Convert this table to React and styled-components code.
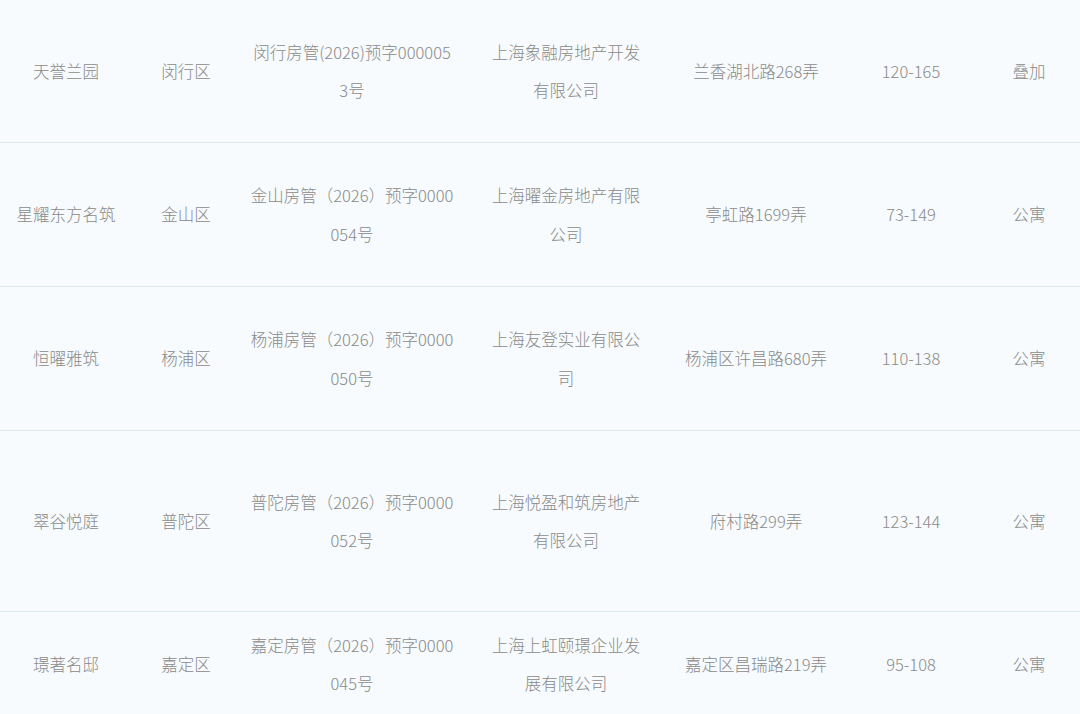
import React from 'react'
import styled, { createGlobalStyle } from 'styled-components'

const GlobalStyle = createGlobalStyle`
  html, body {
    margin: 0;
    padding: 0;
    background-color: #f7fbfd;
  }
  body {
    font-family: "Noto Sans CJK SC", "Noto Sans", sans-serif;
  }
`

const Table = styled.div`
  width: 1080px;
  display: flex;
  flex-direction: column;
  background-color: #f7fbfd;
`

const Row = styled.div`
  display: grid;
  grid-template-columns: 132px 108px 224px 204px 176px 134px 102px;
  height: ${props => props.h}px;
  border-bottom: ${props => (props.last ? 'none' : '1px solid #d9ebee')};
  box-sizing: border-box;
`

const Cell = styled.div`
  display: flex;
  align-items: center;
  justify-content: center;
  text-align: center;
  white-space: pre-line;
  font-size: 16.5px;
  font-weight: 300;
  line-height: 38.5px;
  color: #8a8a8a;
`

const rows = [
  {
    h: 143,
    cells: ['天誉兰园', '闵行区', '闵行房管(2026)预字000005\n3号', '上海象融房地产开发\n有限公司', '兰香湖北路268弄', '120-165', '叠加'],
  },
  {
    h: 144,
    cells: ['星耀东方名筑', '金山区', '金山房管（2026）预字0000\n054号', '上海曜金房地产有限\n公司', '亭虹路1699弄', '73-149', '公寓'],
  },
  {
    h: 144,
    cells: ['恒曜雅筑', '杨浦区', '杨浦房管（2026）预字0000\n050号', '上海友登实业有限公\n司', '杨浦区许昌路680弄', '110-138', '公寓'],
  },
  {
    h: 181,
    cells: ['翠谷悦庭', '普陀区', '普陀房管（2026）预字0000\n052号', '上海悦盈和筑房地产\n有限公司', '府村路299弄', '123-144', '公寓'],
  },
  {
    h: 104,
    cells: ['璟著名邸', '嘉定区', '嘉定房管（2026）预字0000\n045号', '上海上虹颐璟企业发\n展有限公司', '嘉定区昌瑞路219弄', '95-108', '公寓'],
  },
]

export default function App() {
  return (
    <>
      <GlobalStyle />
      <Table>
        {rows.map((row, i) => (
          <Row key={i} h={row.h} last={i === rows.length - 1}>
            {row.cells.map((c, j) => (
              <Cell key={j}>{c}</Cell>
            ))}
          </Row>
        ))}
      </Table>
    </>
  )
}
